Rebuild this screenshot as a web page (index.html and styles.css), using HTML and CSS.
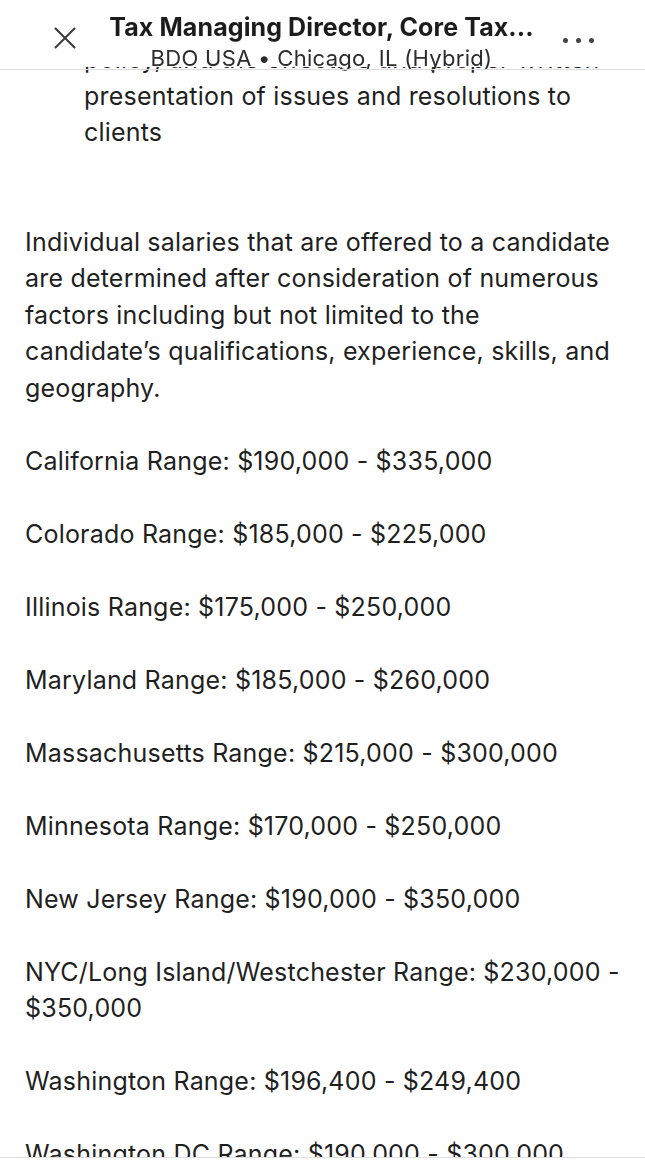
FILE: index.html
```html
<!DOCTYPE html>
<html lang="en">
<head>
  <meta charset="UTF-8" />
  <meta name="viewport" content="width=device-width, initial-scale=1.0"/>
  <title>Tax Managing Director, Core Tax</title>
  <link rel="stylesheet" href="styles.css">
</head>
<body>
  <header class="top-bar">
    <button class="icon-btn close-btn" aria-label="Close">
      <svg width="22" height="22" viewBox="0 0 22 22">
        <path d="M1.5 1.5 L20.5 20.5 M20.5 1.5 L1.5 20.5" stroke="#3a3a3a" stroke-width="2" stroke-linecap="round" fill="none"/>
      </svg>
    </button>
    <div class="job-heading">
      <div class="job-title">Tax Managing Director, Core Tax...</div>
      <div class="job-meta">BDO USA &bull; Chicago, IL (Hybrid)</div>
    </div>
    <button class="icon-btn more-btn" aria-label="More">
      <span></span><span></span><span></span>
    </button>
  </header>

  <main class="description">
    <ul class="duties">
      <li>policy, and the effective and proper written presentation of issues and resolutions to clients</li>
    </ul>

    <p>Individual salaries that are offered to a candidate are determined after consideration of numerous factors including but not limited to the candidate’s qualifications, experience, skills, and geography.</p>

    <p>California Range: $190,000 - $335,000</p>
    <p>Colorado Range: $185,000 - $225,000</p>
    <p>Illinois Range: $175,000 - $250,000</p>
    <p>Maryland Range: $185,000 - $260,000</p>
    <p>Massachusetts Range: $215,000 - $300,000</p>
    <p>Minnesota Range: $170,000 - $250,000</p>
    <p>New Jersey Range: $190,000 - $350,000</p>
    <p>NYC/Long Island/Westchester Range: $230,000 - $350,000</p>
    <p>Washington Range: $196,400 - $249,400</p>
    <p>Washington DC Range: $190,000 - $300,000</p>
  </main>

  <footer class="bottom-bar"></footer>
</body>
</html>
```

FILE: styles.css
```css
body {
  margin: 0;
  font-family: Inter, "Noto Sans", sans-serif;
  background: #ffffff;
  color: #1f1f1f;
  overflow: hidden;
}

.top-bar {
  position: fixed;
  top: 0;
  left: 0;
  right: 0;
  height: 67px;
  background: #ffffff;
  display: flex;
  align-items: flex-start;
  z-index: 2;
}

/* divider sits a little below the white bar */
.top-bar::after {
  content: "";
  position: absolute;
  left: 0;
  right: 0;
  top: 69px;
  height: 1px;
  background: #dcdcdc;
}

.icon-btn {
  background: none;
  border: none;
  padding: 0;
  cursor: pointer;
  display: flex;
  align-items: center;
  justify-content: center;
}

.close-btn {
  width: 40px;
  height: 40px;
  margin: 18px 0 0 45px;
}

.job-heading {
  flex: 1;
  text-align: center;
  padding-top: 12px;
  white-space: nowrap;
}

.job-title {
  font-size: 25px;
  font-weight: 700;
  color: #1c1c1c;
  line-height: 30px;
  letter-spacing: 0.1px;
}

.job-meta {
  font-size: 22px;
  color: #2c2c2c;
  line-height: 26px;
  margin-top: 3px;
  letter-spacing: 0.3px;
}

.more-btn {
  width: 40px;
  height: 40px;
  margin: 20px 47px 0 0;
  gap: 8px;
}

.more-btn span {
  flex: none;
  width: 5px;
  height: 5px;
  border-radius: 50%;
  background: #444;
}

.description {
  padding: 41px 25px 0 25px;
  font-size: 25px;
  line-height: 36.5px;
  letter-spacing: 0.2px;
}

.duties {
  margin: 0 0 73px 0;
  padding-left: 59px;
}

.description p {
  margin: 0 0 36.5px 0;
}

.bottom-bar {
  position: fixed;
  left: 0;
  right: 0;
  bottom: 0;
  height: 8px;
  background: #ffffff;
  border-top: 1px solid #dedede;
}
```
